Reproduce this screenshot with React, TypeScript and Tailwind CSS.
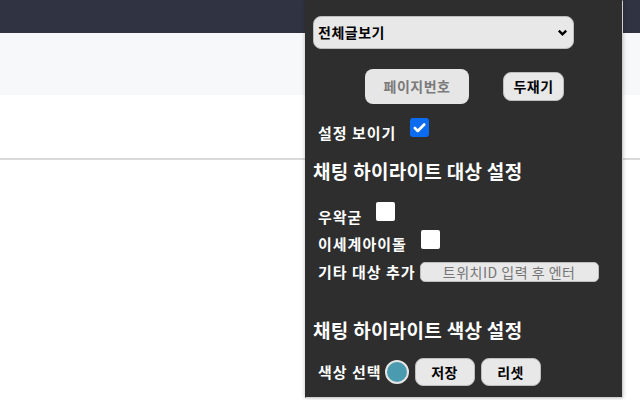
const font = { fontFamily: '"Noto Sans CJK KR", "Noto Sans", sans-serif' }

function Box({ checked }: { checked?: boolean }) {
  if (checked) {
    return (
      <span className="flex h-[19px] w-[19px] shrink-0 items-center justify-center rounded-[3px] bg-[#0b6cf2]">
        <svg viewBox="0 0 16 16" className="h-[15px] w-[15px]">
          <path d="M3 8.5l3.2 3.2L13 4.8" fill="none" stroke="white" strokeWidth="2.8" strokeLinecap="round" strokeLinejoin="round" />
        </svg>
      </span>
    )
  }
  return <span className="block h-[19px] w-[19px] shrink-0 rounded-[2px] bg-white" />
}

const label = "whitespace-nowrap text-[15px] font-bold leading-[20px] tracking-[1px] text-white"
const btn =
  "flex items-center justify-center rounded-[8px] border border-[#bdbdbd] bg-[#e8e8e8] text-[14px] font-bold tracking-[0.5px] text-black"

export default function App() {
  return (
    <div className="relative h-[400px] w-[640px] overflow-hidden bg-white" style={font}>
      {/* page behind */}
      <div className="h-[33px] bg-[#303342]" />
      <div className="h-[62px] bg-[#f7f8fa]" />
      <div className="h-[65px] border-b-2 border-[#d9d9d9] bg-white" />

      {/* popup panel */}
      <div className="absolute left-[305px] top-0 h-[398px] w-[318px] border border-[#cfcfcf] border-l-[#2e2e2e] border-t-[#2e2e2e] bg-[#2e2e2e] px-[7px] shadow-[0_0_4px_rgba(0,0,0,0.25)]">
        <div className="mt-[15px] flex h-[33px] w-[261px] items-center justify-between rounded-[8px] border border-[#bdbdbd] bg-[#e8e8e8] pl-[4px] pr-[5px]">
          <span className="text-[14px] font-bold tracking-[0.5px] text-black">전체글보기</span>
          <svg viewBox="0 0 12 12" className="h-[11px] w-[11px]">
            <path d="M2 4l4 4 4-4" fill="none" stroke="black" strokeWidth="2.6" />
          </svg>
        </div>

        <div className="mt-[20px] flex items-center">
          <button className="ml-[52px] flex h-[35px] w-[104px] items-center justify-center rounded-[8px] bg-[#e6e6e6] text-[14px] font-bold tracking-[0.5px] text-[#7a7a7a]">
            페이지번호
          </button>
          <button className={`ml-[34px] h-[29px] w-[61px] ${btn}`}>두재기</button>
        </div>

        <div className="mt-[14px] flex h-[19px] items-start pl-[5px]">
          <span className={`mt-[5px] ${label}`}>설정 보이기</span>
          <span className="ml-[14px]">
            <Box checked />
          </span>
        </div>

        <div className="mt-[22px] whitespace-nowrap text-[19px] font-bold leading-[24px] tracking-[0.3px] text-white">
          채팅 하이라이트 대상 설정
        </div>

        <div className="mt-[19px] flex h-[19px] items-start pl-[5px]">
          <span className={`mt-[5px] ${label}`}>우왁굳</span>
          <span className="ml-[14px]">
            <Box />
          </span>
        </div>
        <div className="mt-[9px] flex h-[19px] items-start pl-[5px]">
          <span className={`mt-[4px] ${label}`}>이세계아이돌</span>
          <span className="ml-[14px]">
            <Box />
          </span>
        </div>
        <div className="mt-[13px] flex h-[20px] items-center pl-[5px]">
          <span className={label}>기타 대상 추가</span>
          <span className="ml-[4px] flex h-[20px] w-[179px] shrink-0 items-center justify-center rounded-[5px] border border-[#bdbdbd] bg-[#e8e8e8] text-[14px] tracking-[0.5px] text-[#757575]">
            트위치ID 입력 후 엔터
          </span>
        </div>

        <div className="mt-[36px] whitespace-nowrap text-[19px] font-bold leading-[24px] tracking-[0.3px] text-white">
          채팅 하이라이트 색상 설정
        </div>

        <div className="mt-[16px] flex h-[28px] items-center pl-[5px]">
          <span className={label}>색상 선택</span>
          <span className="ml-[3px] block h-[24px] w-[24px] shrink-0 rounded-full border-[2px] border-[#e5e5e5] bg-[#4a9bb0]" />
          <button className={`ml-[6px] h-[28px] w-[60px] ${btn}`}>저장</button>
          <button className={`ml-[6px] h-[28px] w-[60px] ${btn}`}>리셋</button>
        </div>
      </div>
    </div>
  )
}
